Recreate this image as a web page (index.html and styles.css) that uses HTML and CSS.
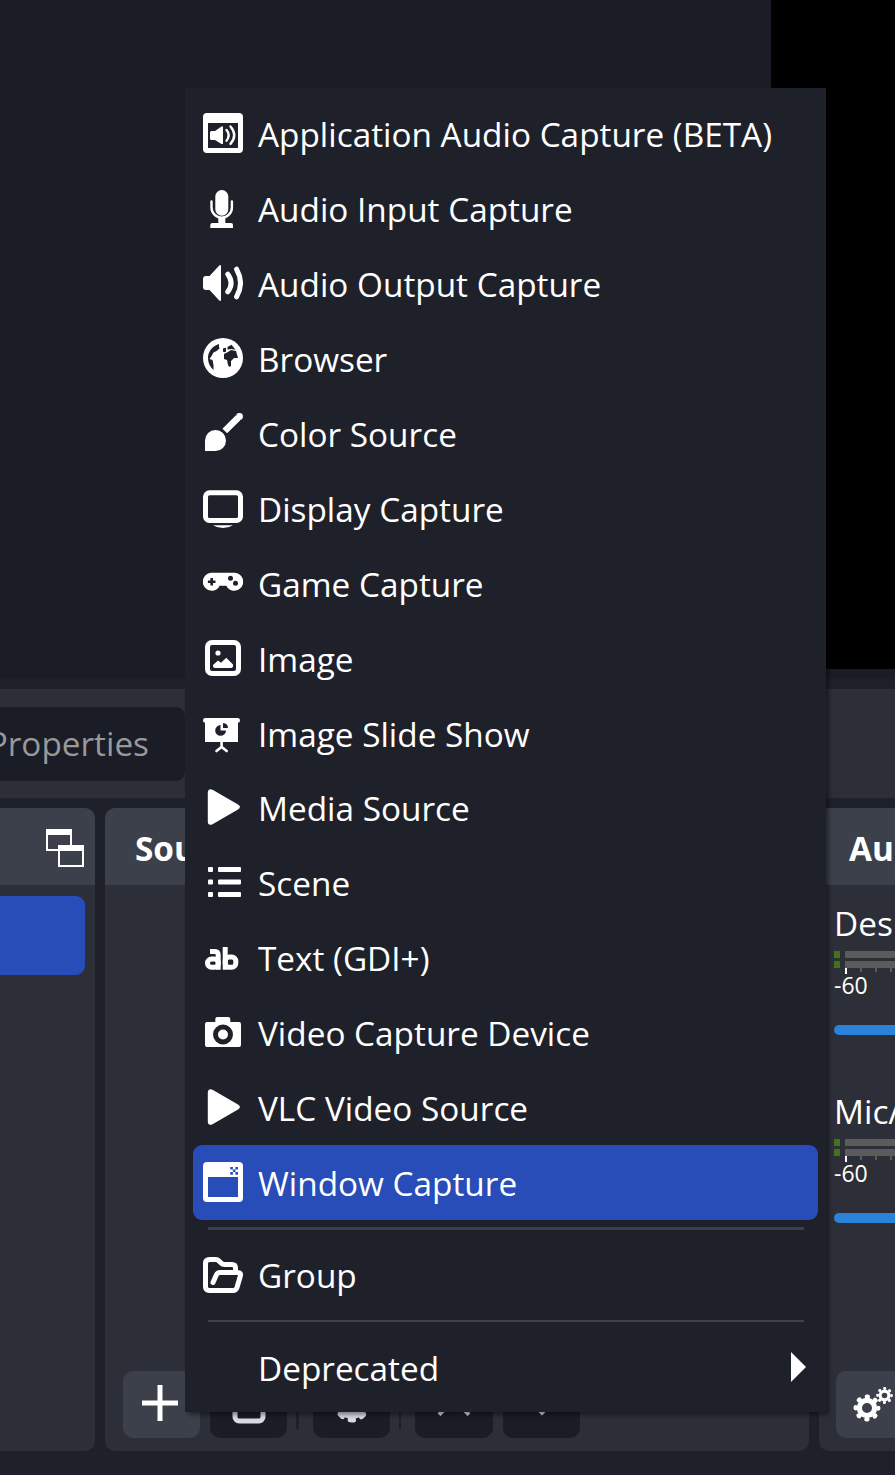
FILE: index.html
```html
<!DOCTYPE html>
<html lang="en">
<head>
<meta charset="utf-8">
<title>Sources</title>
<link rel="stylesheet" href="styles.css">
</head>
<body>
<main class="app">
  <section class="preview"><div class="canvas"></div></section>
  <section class="context"><div class="properties">Properties</div></section>
  <section class="docks">
    <div class="dock scenes">
      <header class="dock-head">
        <svg class="float-icon" width="38" height="38" viewBox="0 0 38 38"><path fill="#fff" fill-rule="evenodd" d="M0 0h26v22H0zM2 6v14h22V6z"/><path fill="#3c404b" d="M12 16h26v22H12z"/><path fill="#fff" fill-rule="evenodd" d="M12 16h26v22H12zM14 22v14h22V22z"/></svg>
      </header>
      <div class="scene-selected"></div>
    </div>
    <div class="dock sources">
      <header class="dock-head">Sources</header>
      <footer class="tools">
        <div class="tool lit"><svg width="36" height="36" viewBox="0 0 36 36"><path d="M18 0v36M0 18h36" stroke="#fff" stroke-width="5"/></svg></div>
        <div class="tool gap10"><svg width="34" height="38" viewBox="0 0 34 38"><path d="M3 8v23a4 4 0 0 0 4 4h20a4 4 0 0 0 4-4V8M0 5h34" fill="none" stroke="#d8dae3" stroke-width="5"/><path d="M12 14v12M17 14v12M22 14v12" stroke="#d8dae3" stroke-width="3"/></svg></div>
        <div class="split"></div>
        <div class="tool gear-tool"><svg width="36" height="36" viewBox="0 0 36 36"><circle cx="18" cy="18" r="10" fill="none" stroke="#d8dae3" stroke-width="8"/><circle cx="18" cy="18" r="15" fill="none" stroke="#d8dae3" stroke-width="5" stroke-linecap="round" stroke-dasharray="3.5 8.28" stroke-dashoffset="1.75"/></svg></div>
        <div class="split thin"></div>
        <div class="tool up-tool"><svg width="36" height="30" viewBox="0 0 36 30"><path d="M3 24.6 18 10l15 14.6" fill="none" stroke="#d8dae3" stroke-width="4"/></svg></div>
        <div class="tool gap10"><svg width="36" height="30" viewBox="0 0 36 30"><path d="M3 8l15 14.6L33 8" fill="none" stroke="#d8dae3" stroke-width="4"/></svg></div>
      </footer>
    </div>
    <div class="dock mixer">
      <header class="dock-head">Audio Mixer</header>
      <div class="channel">
        <div class="name">Desktop Audio</div>
        <div class="meter"><i></i><b></b></div>
        <div class="meter"><i></i><b></b></div>
        <div class="ticks"><i></i><i></i><i></i><i></i></div>
        <div class="scale">-60</div>
        <div class="slider"></div>
      </div>
      <div class="channel second">
        <div class="name">Mic/Aux</div>
        <div class="meter"><i></i><b></b></div>
        <div class="meter"><i></i><b></b></div>
        <div class="ticks"><i></i><i></i><i></i><i></i></div>
        <div class="scale">-60</div>
        <div class="slider"></div>
      </div>
      <footer class="tools mixer-tools">
        <div class="tool lit gears"><svg width="42" height="36" viewBox="0 0 42 36"><g fill="none" stroke="#fff"><circle cx="14" cy="22" r="7.6" stroke-width="5.2"/><circle cx="14" cy="22" r="11.3" stroke-width="4.4" stroke-linecap="round" stroke-dasharray="1 7.875" stroke-dashoffset=".5"/><circle cx="31.5" cy="9.5" r="4.4" stroke-width="3.2"/><circle cx="31.5" cy="9.5" r="7" stroke-width="2.8" stroke-linecap="round" stroke-dasharray=".5 4.998" stroke-dashoffset=".25"/></g></svg></div>
      </footer>
    </div>
  </section>
</main>

<nav class="menu">
  <div class="item"><svg class="ico" viewBox="0 0 40 40"><path fill-rule="evenodd" d="M4 0h32a4 4 0 0 1 4 4v32a4 4 0 0 1-4 4H4a4 4 0 0 1-4-4V4a4 4 0 0 1 4-4zM5 10v25h30V10z"/><path d="M7 19.5q0-1.5 1.5-1.5h3.5l6.5-4.5H20V31h-1.500L12 27H8.500Q7 27 7 25.500z"/><path class="line" stroke-width="2.400" d="M23.500 17q4.500 5.300 0 10.700M27.500 13.500q7.500 8.700 0 17.400"/></svg>Application Audio Capture (BETA)</div>
  <div class="item"><svg class="ico" viewBox="0 0 40 40"><rect x="12.300" y="2" width="13" height="25.700" rx="6.500"/><path class="line" stroke-width="2.400" d="M8.500 13.500v6a10.200 10.200 0 0 0 20.400 0v-6"/><path d="M15.300 30h7v5H28q2 0 2 2v3H7.300v-3q0-2 2-2h6z"/></svg>Audio Input Capture</div>
  <div class="item"><svg class="ico" viewBox="0 0 40 40"><path d="M0 16q0-3 3-3h3.500L16.500 2.300H18v35.400h-1.500L6.500 27H3q-3 0-3-3z"/><path class="line" stroke-width="5" d="M24.800 11.200q6.600 8.800 0 17.600M33.600 6.200q7.800 13.800 0 27.600"/></svg>Audio Output Capture</div>
  <div class="item"><svg class="ico" viewBox="0 0 40 40"><circle cx="20" cy="20" r="20"/><g fill="#1f212a"><path d="M16 6C9 8 5 14 5 20c0 5 2 9 5.500 12V27l-1-5-3-1 2-3 2-3.500 3-1.500 3-2.500-.500-2z"/><path d="M20 10.500q3-1.500 3 0v3q-2 1.500-3 0zM24.500 9l4-2.200 4 5-4-.8-4 .5z"/><path d="M25 14l3-2 5 1 2 7h-4l-3 3v5q-2 2-3-1l-1-5-3-1v-5z"/></g></svg>Browser</div>
  <div class="item"><svg class="ico" viewBox="0 0 40 40"><path d="M2 38V27.500A10.500 10.500 0 1 1 12.500 38z"/><path stroke="#fff" stroke-width="6.600" d="M21.800 18 35 4.800"/><circle cx="36.500" cy="3.500" r="3.400"/></svg>Color Source</div>
  <div class="item"><svg class="ico" viewBox="0 0 40 40"><rect class="line" x="2.500" y="4.800" width="35" height="27.700" rx="4" stroke-width="5"/><path d="M10 37.300h20q-4 2.700-10 2.700t-10-2.700z"/></svg>Display Capture</div>
  <div class="item"><svg class="ico" viewBox="0 0 40 40"><path d="M9 9.700h22a9 9 0 1 1-6.500 15L23.500 22.700h-7l-1 2A9 9 0 1 1 9 9.700z"/><g fill="#1f212a"><path d="M7.400 14.900H10v2.500h2.500V20H10v2.500H7.400V20H4.900v-2.600h2.500z"/><circle cx="27.500" cy="15.300" r="2.500"/><circle cx="32.500" cy="20.200" r="2.500"/></g></svg>Game Capture</div>
  <div class="item"><svg class="ico" viewBox="0 0 40 40"><rect class="line" x="4.500" y="4.500" width="31" height="31" rx="4.500" stroke-width="5"/><circle cx="15" cy="15" r="2.600"/><path d="M10 28v-1l5-4.500 3 2.200 5.300-4.900L30 26.500V28q0 2-2 2H12q-2 0-2-2z"/></svg>Image</div>
  <div class="item short"><svg class="ico" viewBox="0 0 40 40"><rect y="5" width="37" height="4.800" rx="2.400"/><path d="M2 8h33v21H2z"/><path class="line" stroke-width="2.600" d="M18.600 29v4.500M13.500 38l5.100-4 5.100 4"/><g fill="#1f212a"><path d="M17.500 12v5.500H23A5.400 5.400 0 1 1 17.500 12zM20 10q5 .3 5 5h-5z"/></g></svg>Image Slide Show</div>
  <div class="item"><svg class="ico" viewBox="0 0 40 40"><path d="M4.800 5.500c0-3 2-4.200 4.700-2.700L35 17.600c2.600 1.500 2.600 3.300 0 4.800L9.500 37.200c-2.700 1.500-4.700.3-4.700-2.700z"/></svg>Media Source</div>
  <div class="item"><svg class="ico" viewBox="0 0 40 40"><rect x="5" y="5" width="5" height="5" rx="1"/><rect x="15" y="5" width="23" height="5" rx="1"/><rect x="5" y="17.500" width="5" height="5" rx="1"/><rect x="15" y="17.500" width="23" height="5" rx="1"/><rect x="5" y="30" width="5" height="5" rx="1"/><rect x="15" y="30" width="23" height="5" rx="1"/></svg>Scene</div>
  <div class="item"><svg class="ico" viewBox="0 0 40 40"><rect class="line" x="4.500" y="22" width="10.800" height="8.200" rx="4" stroke-width="5"/><path class="line butt" stroke-width="5" d="M7 14.500h5q3.200 0 3.200 3.500v14.700"/><rect class="line" x="22.200" y="20" width="10.600" height="10.200" rx="4" stroke-width="5"/><rect x="19.700" y="10" width="5" height="22.700"/></svg>Text (GDI+)</div>
  <div class="item"><svg class="ico" viewBox="0 0 40 40"><path d="M4 10h8.300V7q0-2 2-2h11q2 0 2 2v3H36q2 0 2 2v21q0 2-2 2H4q-2 0-2-2V12q0-2 2-2z"/><circle cx="20" cy="22.500" r="7.500" fill="none" stroke="#1f212a" stroke-width="5"/></svg>Video Capture Device</div>
  <div class="item"><svg class="ico" viewBox="0 0 40 40"><path d="M4.800 5.500c0-3 2-4.200 4.700-2.700L35 17.600c2.600 1.500 2.600 3.300 0 4.800L9.500 37.200c-2.700 1.500-4.700.3-4.700-2.700z"/></svg>VLC Video Source</div>
  <div class="item selected"><svg class="ico" viewBox="0 0 40 40"><path fill-rule="evenodd" d="M4 0h32a4 4 0 0 1 4 4v32a4 4 0 0 1-4 4H4a4 4 0 0 1-4-4V4a4 4 0 0 1 4-4zM5 15v20h30V15z"/><path fill="#284cb8" d="M27.300 5h2.600v2.600h-2.600zM32.400 5H35v2.600h-2.600zM29.900 7.600h2.500v2.500h-2.500zM27.300 10.100h2.600v2.600h-2.600zM32.400 10.100H35v2.600h-2.600z"/></svg>Window Capture</div>
  <hr class="rule first">
  <div class="item"><svg class="ico" viewBox="0 0 40 40"><path class="line" stroke-width="5" stroke-linejoin="round" d="M10 28.500l3.300-7.500q1.200-2.500 3.700-2.500h17.500q4 0 2.700 4L34 33.500q-1 3-4 3H6.500q-4 0-4-4v-23q0-4 4-4H13q1.500 0 2.700 1.200l2.600 2.600q1.200 1.200 3 1.200H29q3.500 0 3.500 3.500v4"/></svg>Group</div>
  <hr class="rule second">
  <div class="item"><span class="ico"></span>Deprecated<svg class="arrow" width="15" height="30" viewBox="0 0 15 30"><path d="M0 0l15 15L0 30z"/></svg></div>
</nav>
</body>
</html>
```
FILE: styles.css
```css
* { box-sizing: border-box; }

body {
  margin: 0;
  width: 895px;
  height: 1475px;
  overflow: hidden;
  position: relative;
  background: #1f212a;
  color: #fff;
  font: 33.33px/44px "Open Sans", sans-serif;
}

.app {
  display: flex;
  flex-direction: column;
  gap: 10px;
  height: 1475px;
  padding-bottom: 24px;
  overflow: hidden;
}

.preview {
  height: 679px;
  flex: none;
  display: flex;
  justify-content: flex-end;
  background: #1a1c26;
}
.canvas { width: 124px; height: 669px; background: #000; }

.context {
  height: 109px;
  flex: none;
  display: flex;
  align-items: center;
  background: #2c2e38;
}
.properties {
  display: flex;
  justify-content: flex-end;
  align-items: center;
  width: 185px;
  height: 74px;
  padding-right: 36px;
  padding-bottom: 1px;
  border-radius: 0 9px 9px 0;
  background: #1a1c26;
  color: #999;
}

.docks { display: flex; gap: 10px; flex: 1; min-height: 0; }
.dock {
  display: flex;
  flex-direction: column;
  flex: none;
  overflow: hidden;
  border-radius: 10px;
  background: #2c2e38;
}
.dock-head {
  display: flex;
  align-items: center;
  flex: none;
  height: 77px;
  padding: 2px 0 0 30px;
  background: #3c404b;
  font-weight: 700;
  white-space: nowrap;
}
.scenes { width: 95px; border-radius: 0 10px 10px 0; }
.scenes .dock-head { justify-content: flex-end; padding: 2px 11px 0 0; }
.scene-selected {
  width: 85px;
  height: 79px;
  margin-top: 11px;
  border-radius: 0 9px 9px 0;
  background: #284cb8;
}
.sources { width: 704px; }
.mixer { width: 76px; border-radius: 10px 0 0 10px; }

.tools { display: flex; margin-top: auto; padding: 0 0 13px 18px; }
.tool {
  display: flex;
  justify-content: center;
  align-items: center;
  flex: none;
  width: 77px;
  height: 67px;
  border-radius: 10px;
  background: #1a1c26;
}
.tool.lit { background: #3c404b; }
.lit svg { margin-right: 3px; margin-bottom: 4px; }
.gap10 { margin-left: 10px; }
.split { width: 3px; height: 58px; margin-left: 9px; background: #1f212a; }
.thin { width: 2px; }
.gear-tool { margin-left: 14px; }
.up-tool { width: 78px; margin-left: 14px; }
.mixer-tools { padding-left: 17px; }
.gears { justify-content: flex-start; padding-left: 17px; }
.gears svg { margin: 0 0 2px; }

.channel { padding-left: 15px; height: 188px; flex: none; }
.second { padding-top: 0; }
.name { height: 66px; padding-top: 16px; white-space: nowrap; }
.meter { display: flex; gap: 5px; height: 7px; margin-bottom: 3px; }
.meter i { width: 7px; background: #42731a; }
.meter b { width: 60px; background: #5b5b5b; }
.ticks { display: flex; gap: 13px; height: 6px; margin-top: -3px; padding-left: 11px; }
.ticks i { width: 2px; height: 4px; background: #5b5b5b; }
.ticks i:first-child { height: 6px; background: #fff; }
.scale { height: 51px; padding-top: 0; font-size: 23px; line-height: 22px; }
.slider { width: 70px; height: 10px; border-radius: 5px; background: #2a82da; }

.menu {
  position: absolute;
  left: 185px;
  top: 88px;
  width: 641px;
  height: 1324px;
  padding: 8px;
  background: #1f212a;
  box-shadow: 3px 3px 4px rgba(0, 0, 0, .4);
}
.item {
  display: flex;
  height: 75px;
  padding: 16px 12px 0 10px;
  white-space: nowrap;
}
.short { height: 74px; }
.selected { border-radius: 9px; background: #284cb8; }
.ico {
  display: block;
  flex: none;
  width: 40px;
  height: 40px;
  margin: 1px 15px 0 0;
  fill: #fff;
}
.line { fill: none; stroke: #fff; stroke-linecap: round; }
.butt { stroke-linecap: butt; }
.rule { border: 0; margin: 0 14px 0 15px; background: #3c404b; }
.first { height: 3px; margin-top: 7px; margin-bottom: 7px; }
.second.rule { height: 2px; margin-top: 8px; margin-bottom: 8px; }
.arrow { display: block; margin: 6px 0 0 auto; fill: #fff; }
```
